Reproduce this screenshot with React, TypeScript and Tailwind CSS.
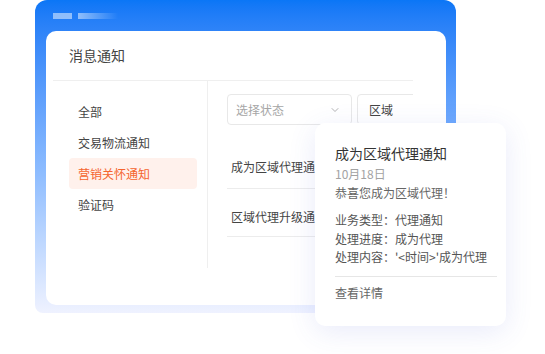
import { ChevronDown } from "lucide-react";

const menu = ["全部", "交易物流通知", "营销关怀通知", "验证码"];

export default function App() {
  return (
    <div
      className="relative w-[545px] h-[354px] overflow-hidden bg-white"
      style={{ fontFamily: '"Noto Sans CJK SC", "Noto Sans", sans-serif' }}
    >
      <div className="ml-[35px] w-[421px] h-[313px] rounded-t-[12px] rounded-b-[8px] bg-gradient-to-b from-[#0a76f6] via-[#8dbcff] via-55% to-[#eff2ff] pt-[13px] pb-[8px] px-[10px] pl-[11px] flex flex-col">
        <div className="flex gap-[6px] pl-[7px]">
          <div className="w-[19px] h-[6px] bg-white/50" />
          <div className="w-[40px] h-[6px] bg-gradient-to-r from-white/50 to-white/0" />
        </div>

        <div className="mt-[12px] flex-1 bg-white rounded-[10px] pl-[7px] pr-[33px]">
          <div className="h-[50px] border-b border-[#efefef] pl-[16px] flex items-center text-[14px] text-[#444]">
            消息通知
          </div>

          <div className="flex">
            <div className="w-[155px] h-[187px] border-r border-[#efefef] pt-[15px] pl-[16px] pr-[10px] text-[12px]">
              {menu.map((m, i) => (
                <div
                  key={m}
                  className={
                    i === 2
                      ? "h-[31px] flex items-center pl-[9px] rounded-[4px] bg-[#fff1ec] text-[#f5642e]"
                      : "h-[31px] flex items-center pl-[9px] text-[#444]"
                  }
                >
                  {m}
                </div>
              ))}
            </div>

            <div className="flex-1 overflow-hidden pl-[19px] pt-[13px]">
              <div className="flex gap-[5px] text-[12px]">
                <div className="w-[125px] h-[31px] shrink-0 border border-[#e8e8e8] rounded-[4px] flex items-center justify-between pl-[8px] pr-[10px] text-[#a6a6a6]">
                  <span>选择状态</span>
                  <ChevronDown size={12} strokeWidth={1.5} className="text-[#999]" />
                </div>
                <div className="w-[100px] h-[31px] shrink-0 border border-[#e8e8e8] rounded-[4px] flex items-center pl-[11px] text-[#444]">
                  区域
                </div>
              </div>

              <div className="mt-[16px] text-[12px] text-[#444] leading-[18px]">
                <div className="pt-[17px] pb-[12px] pl-[4px] border-b border-[#ececec] whitespace-nowrap">
                  成为区域代理通知
                </div>
                <div className="pt-[19px] pb-[10px] pl-[4px] border-b border-[#ececec] whitespace-nowrap">
                  区域代理升级通知
                </div>
              </div>
            </div>
          </div>
        </div>
      </div>

      <div className="absolute left-[315px] top-[123px] w-[191px] h-[203px] rounded-[10px] bg-white shadow-[0_6px_28px_rgba(70,90,210,0.12)] pl-[20px] pt-[20px]">
        <div className="text-[14px] leading-[20px] text-[#333]">成为区域代理通知</div>
        <div className="mt-[2px] text-[12px] leading-[18px] text-[#a3a3a3]">10月18日</div>
        <div className="mt-[1px] text-[12px] leading-[18px] text-[#666]">恭喜您成为区域代理！</div>
        <div className="mt-[9px] text-[12px] leading-[18.5px] text-[#555]">
          <div>业务类型：代理通知</div>
          <div>处理进度：成为代理</div>
          <div>处理内容：'&lt;时间&gt;'成为代理</div>
        </div>
        <div className="mt-[9px] w-[162px] border-t border-[#e6e6e6]" />
        <div className="mt-[7px] text-[12px] leading-[18px] text-[#666]">查看详情</div>
      </div>
    </div>
  );
}
